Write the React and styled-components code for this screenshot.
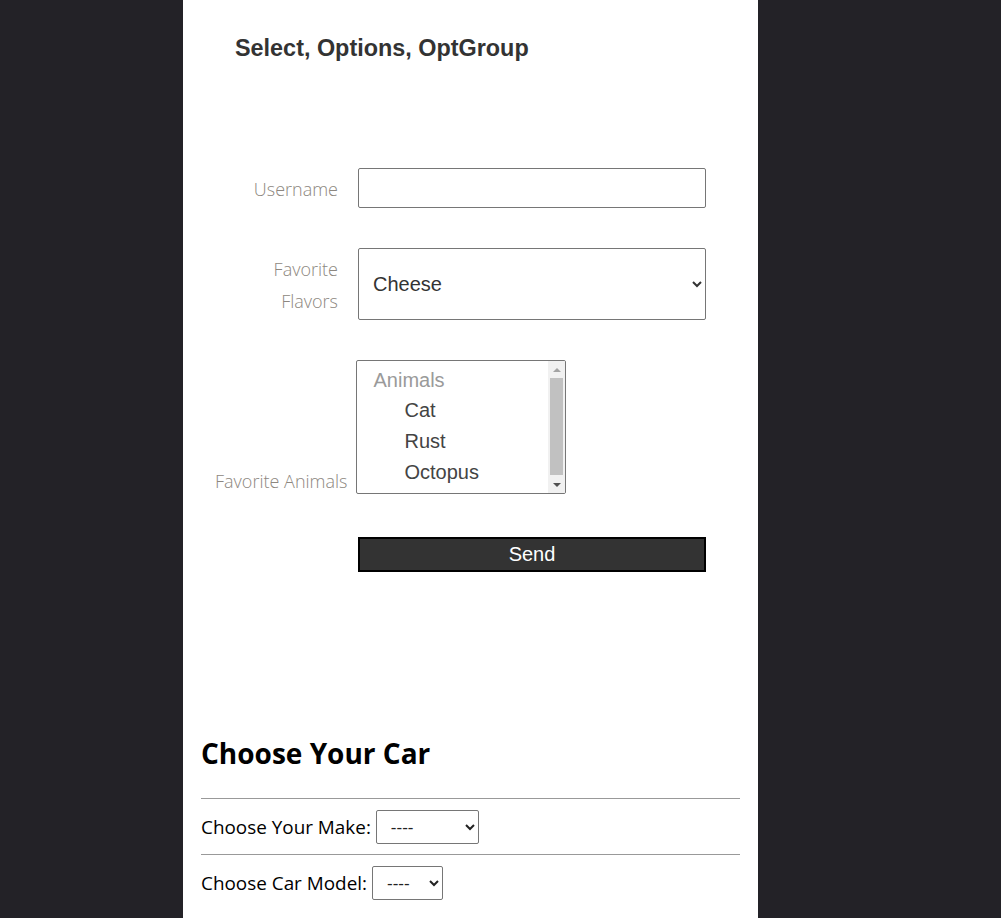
import React from "react";
import styled, { createGlobalStyle } from "styled-components";

const Global = createGlobalStyle`
  html, body { margin: 0; padding: 0; }
  body { background: #232227; font-family: "Liberation Sans", Arial, sans-serif; }
`;

const Column = styled.main`
  margin-left: 183px;
  width: 575px;
  min-height: 918px;
  background: #ffffff;
  box-sizing: border-box;
  padding: 0 18px;
`;

const Title = styled.h3`
  margin: 0;
  padding: 34px 0 0 34px;
  font-family: "Liberation Sans", Arial, sans-serif;
  font-size: 23.4px;
  font-weight: bold;
  line-height: 28px;
  color: #333333;
`;

const Form = styled.form`
  display: flex;
  flex-direction: column;
  padding: 106px 0 0 14px;
`;

const Row = styled.div`
  display: flex;
  align-items: ${(p) => (p.$bottom ? "flex-end" : "center")};
  margin-bottom: ${(p) => p.$mb || 40}px;
`;

const Label = styled.label`
  font-family: "Open Sans", "Noto Sans", sans-serif;
  font-weight: 300;
  font-size: 18px;
  line-height: 32px;
  color: #8d8780;
  text-align: right;
  box-sizing: border-box;
  ${(p) =>
    p.$inline
      ? `white-space: nowrap; margin-right: 9px; line-height: 26px;`
      : `width: 123px; margin-right: 20px; padding-top: 1px;`}
`;

const TextInput = styled.input`
  width: 348px;
  height: 40px;
  box-sizing: border-box;
  border: 1px solid #767676;
  border-radius: 2px;
  font-size: 20px;
  padding: 0 14px;
  font-family: "Liberation Sans", Arial, sans-serif;
  background: #fff;
`;

const Select = styled.select`
  width: 348px;
  height: 72px;
  box-sizing: border-box;
  border: 1px solid #767676;
  border-radius: 2px;
  font-size: 20px;
  padding: 0 10px;
  color: #333;
  background: #fff;
  font-family: "Liberation Sans", Arial, sans-serif;
`;

/* Custom multi-select list box */
const ListFrame = styled.div`
  display: flex;
  width: 210px;
  height: 134px;
  box-sizing: border-box;
  border: 1px solid #767676;
  border-radius: 2px;
  background: #fff;
  overflow: hidden;
`;

const ListItems = styled.ul`
  flex: 1;
  margin: 0;
  padding: 5px 0 0;
  list-style: none;
  overflow: hidden;
  font-family: "Liberation Sans", Arial, sans-serif;
  font-size: 20px;
`;

const GroupLabel = styled.li`
  height: 29px;
  line-height: 29px;
  padding-left: 16px;
  color: #9a9a9a;
`;

const Option = styled.li`
  height: 31px;
  line-height: 31px;
  padding-left: 47px;
  color: #444;
  white-space: nowrap;
`;

const ScrollBar = styled.div`
  width: 17px;
  flex: none;
  display: flex;
  flex-direction: column;
  background: #f1f1f1;
`;

const ArrowBtn = styled.div`
  height: 17px;
  display: flex;
  align-items: center;
  justify-content: center;
  &::before {
    content: "";
    width: 0;
    height: 0;
    border-left: 4px solid transparent;
    border-right: 4px solid transparent;
    ${(p) =>
      p.$down
        ? `border-top: 4px solid #505050;`
        : `border-bottom: 4px solid #a3a3a3;`}
  }
`;

const Track = styled.div`
  flex: 1;
  padding: 0 2px;
`;

const Thumb = styled.div`
  height: 97px;
  background: #c1c1c1;
`;

const SendButton = styled.button`
  margin-left: 143px;
  width: 348px;
  height: 35px;
  box-sizing: border-box;
  background: #333333;
  border: 2px solid #000;
  color: #ffffff;
  font-size: 20px;
  font-family: "Liberation Sans", Arial, sans-serif;
  padding: 0;
`;

const CarSection = styled.section`
  padding-top: 121px;
  font-family: "Open Sans", "Noto Sans", sans-serif;
`;

const CarTitle = styled.h2`
  margin: 0 0 25px;
  font-size: 28px;
  font-weight: 700;
  line-height: 40px;
  color: #000;
`;

const Rule = styled.hr`
  margin: 0;
  border: none;
  border-top: 1px solid #999;
`;

const CarRow = styled.div`
  display: flex;
  align-items: center;
  padding: 11px 0 10px;
  font-size: 18.9px;
  line-height: 26px;
  color: #000;
`;

const SmallSelect = styled.select`
  margin-left: 5px;
  width: ${(p) => p.$w}px;
  height: 34px;
  box-sizing: border-box;
  border: 1px solid #767676;
  border-radius: 2px;
  font-size: 17px;
  padding: 0 10px;
  color: #222;
  background: #fff;
  font-family: "Liberation Sans", Arial, sans-serif;
`;

const animals = ["Cat", "Rust", "Octopus"];

export default function App() {
  return (
    <>
      <Global />
      <Column>
        <Title>Select, Options, OptGroup</Title>
        <Form onSubmit={(e) => e.preventDefault()}>
          <Row>
            <Label htmlFor="username">Username</Label>
            <TextInput id="username" type="text" />
          </Row>
          <Row>
            <Label htmlFor="flavors">Favorite Flavors</Label>
            <Select id="flavors" defaultValue="cheese">
              <option value="cheese">Cheese</option>
              <option value="chocolate">Chocolate</option>
              <option value="vanilla">Vanilla</option>
            </Select>
          </Row>
          <Row $bottom $mb={43}>
            <Label $inline id="animals-label">Favorite Animals</Label>
            <ListFrame role="listbox" aria-multiselectable="true" aria-labelledby="animals-label">
              <ListItems>
                <GroupLabel role="presentation">Animals</GroupLabel>
                {animals.map((a) => (
                  <Option key={a} role="option" aria-selected="false">
                    {a}
                  </Option>
                ))}
              </ListItems>
              <ScrollBar aria-hidden="true">
                <ArrowBtn />
                <Track>
                  <Thumb />
                </Track>
                <ArrowBtn $down />
              </ScrollBar>
            </ListFrame>
          </Row>
          <Row>
            <SendButton type="submit">Send</SendButton>
          </Row>
        </Form>
        <CarSection>
          <CarTitle>Choose Your Car</CarTitle>
          <Rule />
          <CarRow>
            Choose Your Make:
            <SmallSelect $w={103} defaultValue="">
              <option value="">----</option>
              <option>Volkswagen</option>
              <option>Toyota</option>
            </SmallSelect>
          </CarRow>
          <Rule />
          <CarRow>
            Choose Car Model:
            <SmallSelect $w={71} defaultValue="">
              <option value="">----</option>
            </SmallSelect>
          </CarRow>
        </CarSection>
      </Column>
    </>
  );
}
